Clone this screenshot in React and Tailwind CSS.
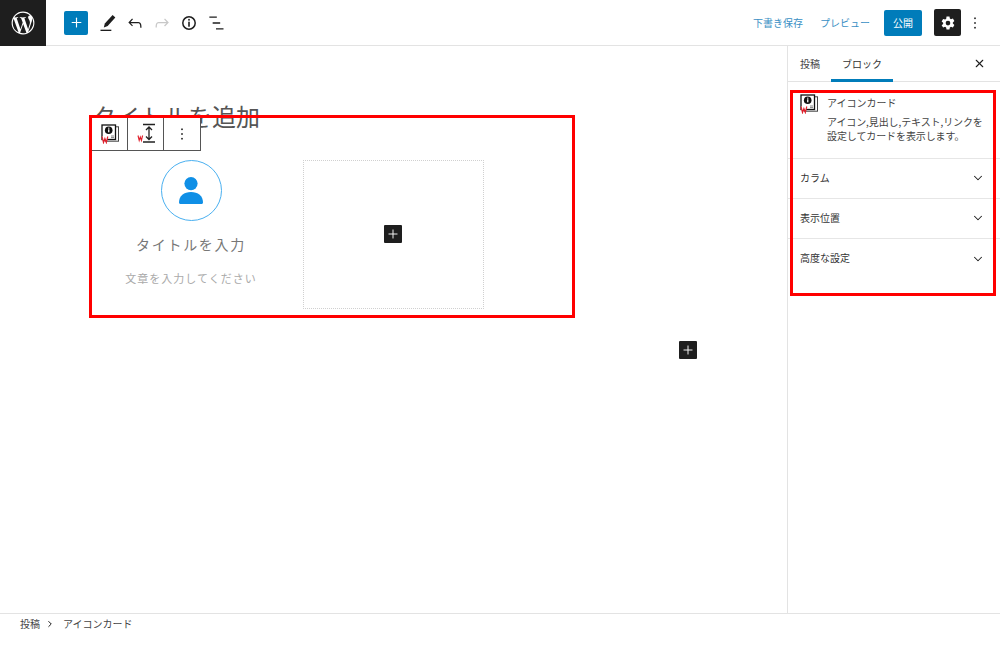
import React from "react";
import { Plus, X, ChevronDown, ChevronRight } from "lucide-react";

const sans = "[font-family:'Noto_Sans_CJK_JP','Liberation_Sans',sans-serif]";

function CardIcon({ className = "" }) {
  return (
    <svg viewBox="0 0 20 20" className={className}>
      <rect x="5.2" y="2.8" width="13.3" height="14.4" fill="none" stroke="#444" strokeWidth="1" />
      <rect x="2" y="1" width="13.5" height="14.500" fill="#fff" stroke="#111" strokeWidth="1.3" />
      <circle cx="8.7" cy="6.2" r="3.8" fill="#111" />
      <rect x="8.1" y="5.3" width="1.3" height="3" fill="#fff" />
      <rect x="8.1" y="3.7" width="1.3" height="1" fill="#fff" />
      <path d="M11 12h3M11 13.6h3" stroke="#777" strokeWidth="0.9" />
      <path d="M2 12.5l1.5 6 1.4-4 1.4 4 1.5-6" fill="#fff" stroke="#e1202c" strokeWidth="1.2" />
    </svg>
  );
}

function HeightIcon() {
  return (
    <svg viewBox="0 0 24 24" className="w-[24px] h-[24px]">
      <path d="M9 2.5h12M9 20h12" stroke="#222" strokeWidth="1.3" fill="none" />
      <path d="M15 5v12.5M12 8l3-3 3 3M12 14.5l3 3 3-3" stroke="#222" strokeWidth="1.3" fill="none" />
      <path d="M4 13.5l1.2 5 1.1-3.4 1.1 3.4 1.2-5" fill="none" stroke="#e1202c" strokeWidth="1.1" />
    </svg>
  );
}

function WpLogo() {
  return (
    <svg viewBox="0 0 24 24" className="w-[24px] h-[24px]" fill="#fff">
      <path d="M12 .6a11.4 11.4 0 1 0 0 22.8A11.4 11.4 0 0 0 12 .6zM1.75 12c0-1.49.32-2.9.89-4.17l4.89 13.4A10.26 10.26 0 0 1 1.75 12zM12 22.25c-1 0-1.98-.15-2.9-.42l3.08-8.95 3.15 8.64.07.14c-1.06.38-2.2.59-3.4.59zm1.41-15.05c.62-.03 1.17-.1 1.17-.1.55-.07.49-.88-.06-.85 0 0-1.66.13-2.73.13-1 0-2.7-.13-2.7-.13-.55-.03-.62.81-.06.85 0 0 .52.07 1.07.1l1.6 4.37-2.24 6.73L5.72 7.2c.62-.03 1.18-.1 1.18-.1.55-.07.49-.88-.06-.85 0 0-1.66.13-2.73.13l-.65-.01A10.24 10.24 0 0 1 12 1.75c2.67 0 5.1 1.02 6.93 2.69h-.13c-1 0-1.72.88-1.72 1.82 0 .85.49 1.56 1.01 2.41.39.68.85 1.56.85 2.82 0 .88-.34 1.9-.78 3.32l-1.03 3.44-3.72-11.05zm3.75 13.68l3.13-9.05c.58-1.46.78-2.63.78-3.67 0-.38-.03-.73-.07-1.05A10.25 10.25 0 0 1 17.16 20.88z" />
    </svg>
  );
}

function ListView() {
  return (
    <svg viewBox="0 0 24 24" className="w-[20px] h-[20px]" fill="none" stroke="#1e1e1e" strokeWidth="1.6">
      <path d="M4 5h9M8 12h9M12 19h9" />
    </svg>
  );
}

function Pencil() {
  return (
    <svg viewBox="0 0 24 24" className="w-[20px] h-[20px]" fill="#1e1e1e">
      <path d="M17.5 2.5l3.3 3-9.2 10.2-4.6 1.6 1.2-4.7z" />
      <rect x="3" y="20" width="13" height="1.6" />
    </svg>
  );
}

function Gear() {
  return (
    <svg viewBox="0 0 24 24" className="w-[14px] h-[14px]" fill="#fff">
      <path fillRule="evenodd" d="M9.5 1h5l.7 3.4 1.9 1.1 3.3-1.1 2.5 4.3-2.6 2.3v2l2.6 2.3-2.5 4.3-3.3-1.1-1.9 1.1-.7 3.4h-5l-.7-3.4-1.9-1.1-3.3 1.1L1.1 16l2.6-2.3v-2L1.1 9.4l2.5-4.3 3.3 1.1 1.9-1.1zM12 8.2a4 4 0 1 0 0 8 4 4 0 0 0 0-8z" />
    </svg>
  );
}

function Undo() {
  return (
    <svg viewBox="0 0 24 24" className="w-[20px] h-[20px]" fill="#1e1e1e">
      <path d="M18.3 11.7c-.6-.6-1.4-.9-2.3-.9H6.7l2.9-3.3-1.1-1-4.5 5L8.5 16l1-1-2.7-2.7H16c.5 0 .9.2 1.3.5 1 1 1 3.4 1 4.5v.3h1.5v-.2c0-1.5 0-4.3-1.5-5.7z" />
    </svg>
  );
}

function Redo() {
  return (
    <svg viewBox="0 0 24 24" className="w-[20px] h-[20px]" fill="#c8c8c8">
      <path d="M15.6 6.5l-1.1 1 2.9 3.3H8c-.9 0-1.7.3-2.3.9-1.4 1.5-1.4 4.2-1.4 5.6v.2h1.5v-.3c0-1.1 0-3.5 1-4.5.3-.3.7-.5 1.3-.5h9.2L14.5 15l1.1 1.1 4.6-4.6-4.6-5z" />
    </svg>
  );
}

function InfoIcon() {
  return (
    <svg viewBox="0 0 16 16" className="w-[16px] h-[16px]" fill="none">
      <circle cx="8" cy="8" r="6.2" stroke="#1e1e1e" strokeWidth="1.5" />
      <rect x="7.2" y="3.9" width="1.6" height="1.7" fill="#1e1e1e" />
      <rect x="7.2" y="6.7" width="1.6" height="5" fill="#1e1e1e" />
    </svg>
  );
}

function Dots() {
  return (
    <svg viewBox="0 0 4 16" className="w-[4px] h-[16px]" fill="#1e1e1e">
      <rect x="1.2" y="2.5" width="1.6" height="1.6" />
      <rect x="1.2" y="7.2" width="1.6" height="1.6" />
      <rect x="1.2" y="11.9" width="1.6" height="1.6" />
    </svg>
  );
}

function PlusBox({ className = "" }) {
  return (
    <div className={`w-[18px] h-[18px] bg-[#1e1e1e] rounded-[1px] flex items-center justify-center ${className}`}>
      <Plus size={14} color="#fff" strokeWidth={1.6} />
    </div>
  );
}

function Row({ label, last }) {
  return (
    <div className={`h-[40px] pl-[12px] pr-[15px] flex items-center justify-between pb-[1px] ${last ? "" : "border-b border-[#e6e6e6]"}`}>
      <span className="text-[10px] text-[#333] mb-[2px]">{label}</span>
      <ChevronDown size={14} color="#1e1e1e" strokeWidth={1.8} />
    </div>
  );
}

export default function App() {
  return (
    <div className={`w-[1000px] h-[657px] bg-white flex flex-col overflow-hidden relative ${sans}`}>
      <header className="h-[46px] shrink-0 border-b border-[#e3e3e3] flex items-center">
        <div className="w-[46px] h-[46px] -mb-[1px] bg-[#1e1e1e] flex items-center justify-center">
          <WpLogo />
        </div>
        <div className="w-[24px] h-[24px] ml-[18px] bg-[#007cba] rounded-[2px] flex items-center justify-center">
          <Plus size={15} color="#fff" strokeWidth={1.8} />
        </div>
        <div className="flex items-center ml-[10px]">
          <Pencil />
          <div className="ml-[7px]"><Undo /></div>
          <div className="ml-[7px]"><Redo /></div>
          <div className="ml-[9px]"><InfoIcon /></div>
          <div className="ml-[9px]"><ListView /></div>
        </div>
        <div className="ml-auto flex items-center">
          <span className="text-[10px] text-[#3a8fc4] mr-[17px]">下書き保存</span>
          <span className="text-[10px] text-[#3a8fc4] mr-[14px]">プレビュー</span>
          <div className="w-[38px] h-[26px] bg-[#007cba] text-white rounded-[2px] text-[10px] flex items-center justify-center mr-[12px]">公開</div>
          <div className="w-[27px] h-[27px] bg-[#1e1e1e] rounded-[2px] flex items-center justify-center">
            <Gear />
          </div>
          <div className="ml-[12px] mr-[23px] flex"><Dots /></div>
        </div>
      </header>

      <div className="flex-1 flex min-h-0">
        <main className="flex-1 relative min-w-0">
          <div className="pl-[92px] pt-[54px] text-[24px] leading-[36px] text-[#555] [font-family:'Liberation_Serif','Noto_Sans_CJK_JP',serif]">タイトルを追加</div>
          <div className="ml-[91px] mt-[24px] w-[482px] flex">
            <div className="w-[200px] flex flex-col items-center">
              <div className="w-[61px] h-[61px] rounded-full border border-[#4ab0f0] flex items-center justify-center">
                <svg viewBox="0 0 24 27" className="w-[24px] h-[27px]" fill="#0f8fe6">
                  <circle cx="12" cy="6.6" r="6.6" />
                  <path d="M0 25.500C0 19 5 15 12 15s12 4 12 10.500c0 .8-.6 1.500-1.500 1.500h-21C.6 27 0 26.300 0 25.500z" />
                </svg>
              </div>
              <div className="mt-[11px] text-[14px] leading-[24px] tracking-[1.7px] text-[#777]">タイトルを入力</div>
              <div className="mt-[12px] text-[11px] leading-[20px] tracking-[1px] text-[#aaa]">文章を入力してください</div>
            </div>
            <div className="ml-[12px] w-[181px] h-[149px] border border-dotted border-[#d0d0d0] flex items-center justify-center pr-[2px] pb-[2px]">
              <PlusBox />
            </div>
          </div>
          <div className="absolute left-[679px] top-[295px]">
            <PlusBox />
          </div>

          <div className="absolute left-[91px] top-[71px] w-[110px] h-[34px] bg-white border border-[#555] flex">
            <div className="w-[36px] border-r border-[#555] flex items-center justify-center">
              <CardIcon className="w-[20px] h-[20px]" />
            </div>
            <div className="w-[36px] border-r border-[#555] flex items-center justify-center">
              <HeightIcon />
            </div>
            <div className="flex-1 flex items-center justify-center">
              <Dots />
            </div>
          </div>

          <div className="absolute left-[89px] top-[69px] w-[486px] h-[203px] border-[3px] border-[#f00] pointer-events-none" />
        </main>

        <aside className="w-[213px] shrink-0 border-l border-[#e3e3e3] relative">
          <div className="h-[36px] border-b border-[#e3e3e3] flex items-center relative">
            <span className="ml-[12px] text-[10px] text-[#444]">投稿</span>
            <div className="ml-[11px] w-[62px] h-[36px] border-b-[3px] border-[#007cba] flex items-center justify-center pt-[2px] -mb-[1px]">
              <span className="text-[10px] text-[#333]">ブロック</span>
            </div>
            <X size={13} color="#1e1e1e" strokeWidth={2} className="ml-auto mr-[14px]" />
          </div>
          <div className="h-[77px] border-b border-[#e6e6e6] pl-[11px] pt-[12px] flex">
            <CardIcon className="w-[20px] h-[20px] shrink-0" />
            <div className="ml-[8px] mt-[2px]">
              <div className="text-[10px] leading-[14px] text-[#444]">アイコンカード</div>
              <div className="mt-[5px] text-[10px] leading-[14px] text-[#444] w-[160px] tracking-[-0.1px] whitespace-pre-line">{"アイコン,見出し,テキスト,リンクを\n設定してカードを表示します。"}</div>
            </div>
          </div>
          <Row label="カラム" />
          <Row label="表示位置" />
          <Row label="高度な設定" last />
          <div className="absolute left-[2px] top-[44px] w-[206px] h-[206px] border-[3px] border-[#f00] pointer-events-none" />
        </aside>
      </div>

      <footer className="h-[44px] shrink-0 border-t border-[#e3e3e3] flex items-start pl-[20px] pt-[2px] text-[10px] leading-[16px] text-[#444]">
        <span>投稿</span>
        <ChevronRight size={10} color="#1e1e1e" strokeWidth={2.4} className="ml-[5px] mr-[8px] mt-[3px]" />
        <span>アイコンカード</span>
      </footer>
    </div>
  );
}
